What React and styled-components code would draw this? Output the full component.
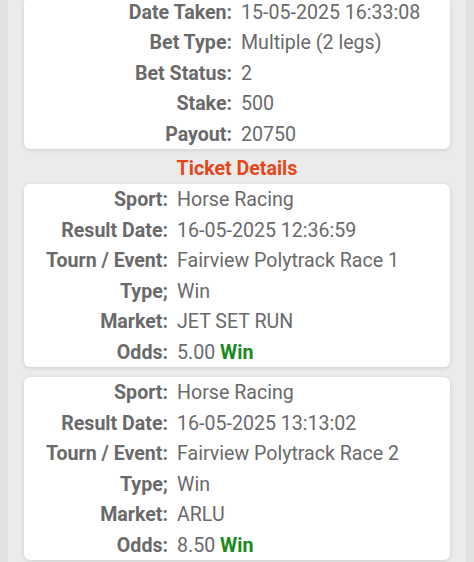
import React from "react";
import styled, { createGlobalStyle } from "styled-components";

const Global = createGlobalStyle`
  html, body { margin: 0; padding: 0; background: #e1e1e1; }
  body { font-family: Roboto, "Noto Sans", Arial, sans-serif; overflow: hidden; }
`;

const Outer = styled.div`
  padding: 0 8px;
  background: #e1e1e1;
  height: 562px;
  overflow: hidden;
`;

const Inner = styled.div`
  background: #ebebeb;
  padding: 0 16px;
  margin-top: -3.5px;
  display: flex;
  flex-direction: column;
`;

const Card = styled.div`
  background: #fff;
  border-radius: 6px;
  box-shadow: 0 1px 4px rgba(0, 0, 0, 0.13);
  display: grid;
  grid-template-columns: ${(p) => p.$labelWidth}px 1fr;
  column-gap: 9px;
  margin-bottom: ${(p) => p.$gap || 0}px;
`;

const Label = styled.div`
  text-align: right;
  font-weight: 700;
  font-size: 19.6px;
  line-height: 29.5px;
  padding-top: 1px;
  color: #6a6a6a;
  white-space: nowrap;
`;

const Value = styled.div`
  font-size: 19.6px;
  line-height: 29.5px;
  padding-top: 1px;
  color: #6a6a6a;
  white-space: nowrap;
`;

const Status = styled.span`
  font-weight: 700;
  color: #1a8a1a;
`;

const Title = styled.div`
  text-align: center;
  font-weight: 700;
  font-size: 19.6px;
  color: #e5471c;
  line-height: 31px;
  padding-top: 4px;
`;

function Rows({ rows }) {
  return rows.map(([l, v]) => (
    <React.Fragment key={l}>
      <Label>{l}</Label>
      <Value>{v}</Value>
    </React.Fragment>
  ));
}

export default function App() {
  const summary = [
    ["Date Taken:", "15-05-2025 16:33:08"],
    ["Bet Type:", "Multiple (2 legs)"],
    ["Bet Status:", "2"],
    ["Stake:", "500"],
    ["Payout:", "20750"],
  ];
  const legs = [
    {
      date: "16-05-2025 12:36:59",
      event: "Fairview Polytrack Race 1",
      market: "JET SET RUN",
      odds: "5.00",
    },
    {
      date: "16-05-2025 13:13:02",
      event: "Fairview Polytrack Race 2",
      market: "ARLU",
      odds: "8.50",
    },
  ];
  return (
    <>
      <Global />
      <Outer>
        <Inner>
          <Card $labelWidth={208}>
            <Rows rows={summary} />
          </Card>
          <Title>Ticket Details</Title>
          {legs.map((leg, i) => (
            <Card key={i} $labelWidth={144} $gap={10}>
              <Rows
                rows={[
                  ["Sport:", "Horse Racing"],
                  ["Result Date:", leg.date],
                  ["Tourn / Event:", leg.event],
                  ["Type;", "Win"],
                  ["Market:", leg.market],
                  [
                    "Odds:",
                    <>
                      {leg.odds} <Status>Win</Status>
                    </>,
                  ],
                ]}
              />
            </Card>
          ))}
        </Inner>
      </Outer>
    </>
  );
}
